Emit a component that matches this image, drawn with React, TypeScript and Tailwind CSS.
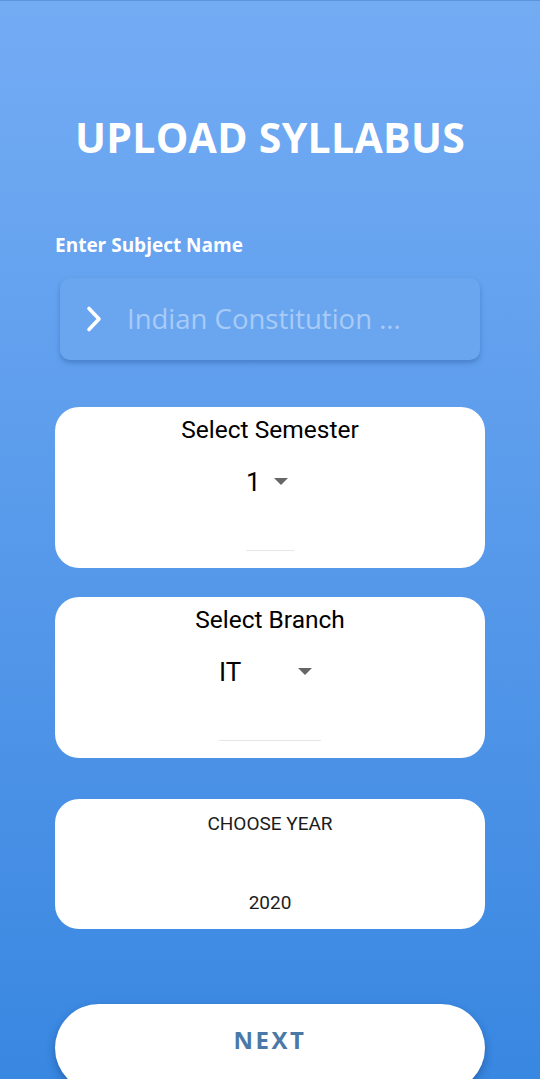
function Caret({ className = '' }: { className?: string }) {
  return (
    <svg width="14" height="8" viewBox="0 0 14 8" className={className}>
      <path d="M0 0 L14 0 L7 7 Z" fill="#666" />
    </svg>
  );
}

function Chevron() {
  return (
    <svg width="20" height="28" viewBox="0 0 20 28" className="shrink-0">
      <path d="M4 3.5 L14 14 L4 24.5" fill="none" stroke="white" strokeWidth="3.6" strokeLinecap="round" strokeLinejoin="round" />
    </svg>
  );
}

function SelectCard({ title, value, wide }: { title: string; value: string; wide?: boolean }) {
  return (
    <div className="h-[161px] rounded-[24px] bg-white flex flex-col items-center pt-[7px] font-['Roboto',sans-serif]">
      <div className="text-[24.5px] leading-[32px] text-black">{title}</div>
      <div className="mt-[20px] flex flex-col items-center">
        <div className={`flex items-center ${wide ? 'w-[102px] justify-between' : 'w-[48px] gap-[13px]'}`}>
          <span className="text-[26px] leading-[32px] text-black">{value}</span>
          <Caret className={wide ? 'mr-[9px]' : ''} />
        </div>
        <div className={`mt-[52px] h-px bg-[#e6e6e6] ${wide ? 'w-[102px]' : 'w-[48px]'}`} />
      </div>
    </div>
  );
}

export default function App() {
  return (
    <div className="w-[540px] h-[1079px] overflow-hidden bg-gradient-to-b from-[#74acf4] to-[#3887e1] border-t border-[#5b95de] flex flex-col px-[55px] font-['Open_Sans',sans-serif]">
      <h1 className="mt-[108px] text-center text-[41px] leading-[56px] font-bold text-white tracking-[0.3px]">
        UPLOAD SYLLABUS
      </h1>

      <label className="mt-[67px] text-[19px] leading-[26px] font-bold text-white">Enter Subject Name</label>

      <div className="mt-[20px] mx-[5px] h-[82px] shrink-0 rounded-[10px] bg-[#6aa6ef] shadow-[0_3px_5px_rgba(30,70,140,0.35)] flex items-center pl-[25px]">
        <Chevron />
        <span className="ml-[22px] text-[27.5px] text-[#a8cbf7]">Indian Constitution ...</span>
      </div>

      <div className="mt-[47px] flex flex-col gap-[29px]">
        <SelectCard title="Select Semester" value="1" />
        <SelectCard title="Select Branch" value="IT" wide />
      </div>

      <div className="mt-[41px] h-[130px] shrink-0 rounded-[24px] bg-white flex flex-col items-center pt-[12px] font-['Roboto',sans-serif]">
        <div className="text-[19px] leading-[26px] text-[#1c1c1c]">CHOOSE YEAR</div>
        <div className="mt-[53px] text-[19px] leading-[26px] text-[#1c1c1c]">2020</div>
      </div>

      <button className="mt-[75px] h-[88px] shrink-0 rounded-full bg-white shadow-[0_4px_8px_rgba(20,60,120,0.45)] flex items-start justify-center pt-[19px]">
        <span className="text-[24px] leading-[34px] font-bold text-[#4b79a7] tracking-[2.5px]">NEXT</span>
      </button>
    </div>
  );
}
